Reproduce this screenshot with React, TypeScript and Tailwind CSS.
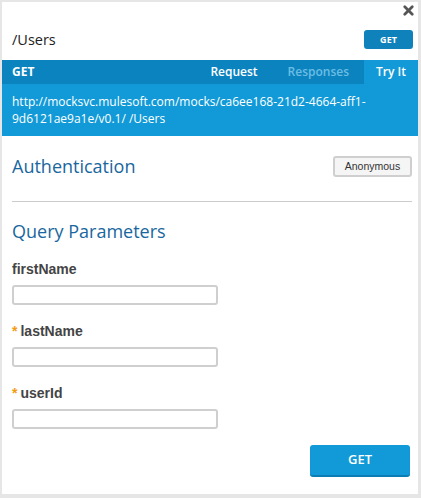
import { X } from 'lucide-react';

const params = [
  { name: 'firstName', required: false },
  { name: 'lastName', required: true },
  { name: 'userId', required: true },
];

export default function App() {
  return (
    <div className="w-[421px] h-[498px] bg-[#e6e6e6] pt-[2px] pl-[2px] pr-[3px] pb-[4px] font-['Open_Sans',sans-serif]">
      <div className="relative h-full bg-white flex flex-col">
        {/* close */}
        <button className="absolute top-[1px] right-[2px] text-[#555]">
          <X className="w-[15px] h-[15px]" strokeWidth={4.5} />
        </button>

        {/* resource header */}
        <div className="h-[58px] pt-[17px] pl-[10px] pr-[5px] flex items-center justify-between">
          <h2 className="text-[14.5px] text-[#222]">/Users</h2>
          <span className="w-[49px] h-[19px] rounded-[3px] bg-[#0f82bc] text-white text-[9px] font-bold flex items-center justify-center">
            GET
          </span>
        </div>

        {/* tabs bar */}
        <div className="h-[24px] bg-[#0b83bf] flex items-center text-white text-[12px] font-semibold">
          <span className="pl-[10px] flex-1 font-bold">GET</span>
          <span className="px-[15px]">Request</span>
          <span className="pl-[15px] pr-[15px] text-[#6cbde3]">Responses</span>
          <span className="w-[54px] h-full bg-[#119ad7] flex items-center justify-center">Try It</span>
        </div>

        {/* url */}
        <div className="bg-[#119ad7] text-white text-[12px] leading-[17px] px-[10px] pt-[9px] pb-[9px]">
          http://mocksvc.mulesoft.com/mocks/ca6ee168-21d2-4664-aff1-
          <br />
          9d6121ae9a1e/v0.1/ /Users
        </div>

        {/* authentication */}
        <div className="pt-[20px] pl-[10px] pr-[6px]">
          <div className="h-[21px] flex items-center justify-between">
            <h3 className="text-[18px] text-[#19679e]">Authentication</h3>
            <button className="w-[79px] h-[21px] rounded-[3px] border-2 border-[#cfcfcf] bg-[#f5f5f5] text-[10.5px] text-[#333] font-['Liberation_Sans',sans-serif]">
              Anonymous
            </button>
          </div>
          <div className="mt-[24px] border-t border-[#cccccc]" />
        </div>

        {/* query parameters */}
        <div className="pl-[10px] pr-[8px] mt-[16px]">
          <h3 className="text-[18px] leading-[26px] text-[#19679e]">Query Parameters</h3>
          <div className="mt-[16px] flex flex-col gap-[17px] font-['Liberation_Sans',sans-serif]">
            {params.map((p) => (
              <div key={p.name} className="flex flex-col gap-[7px]">
                <label className="text-[14px] leading-[18px] font-bold text-[#444]">
                  {p.required && <span className="text-[#f39c12] mr-[3px]">*</span>}
                  {p.name}
                </label>
                <input
                  type="text"
                  className="w-[206px] h-[20px] rounded-[3px] border-2 border-[#cfcfcf] bg-white outline-none"
                />
              </div>
            ))}
          </div>
          <div className="flex justify-end mt-[16px]">
            <button className="w-[100px] h-[32px] rounded-[3px] bg-[#119ad7] border-b-2 border-[#0b7db3] text-white text-[13px] font-semibold">
              GET
            </button>
          </div>
        </div>
      </div>
    </div>
  );
}
